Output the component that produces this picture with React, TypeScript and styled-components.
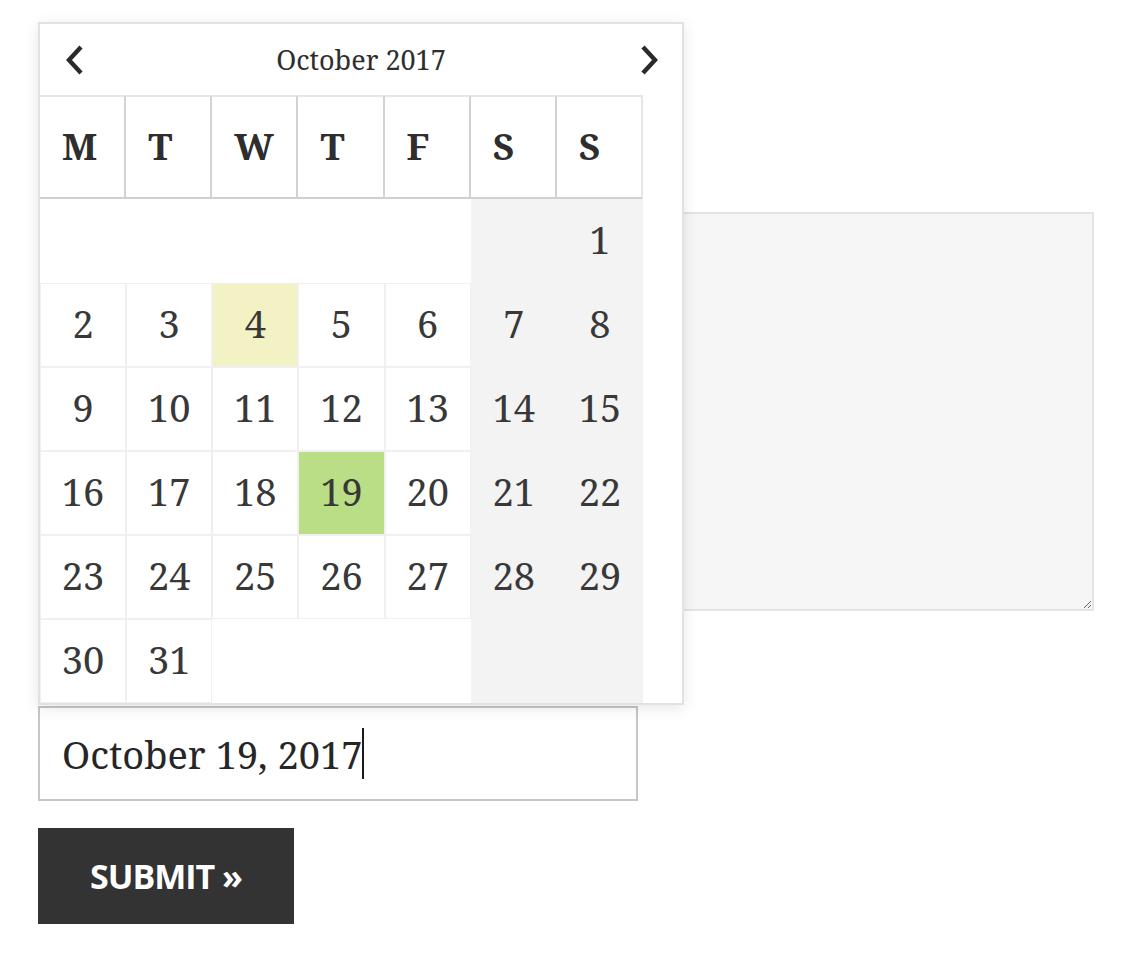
import React, { useLayoutEffect, useRef, useState } from "react";
import styled, { createGlobalStyle } from "styled-components";

const GlobalStyle = createGlobalStyle`
  html, body { margin: 0; padding: 0; background: #ffffff; }
  * { box-sizing: border-box; }
`;

const SERIF = `"Noto Serif", "Droid Serif", "DejaVu Serif", serif`;

const Form = styled.form`
  display: flex;
  flex-direction: column;
  align-items: flex-start;
  padding: 212px 0 0 38px;
  font-family: ${SERIF};
`;

const TextArea = styled.textarea`
  width: 1056px;
  height: 399px;
  background: #f6f6f6;
  border: 2px solid #e4e4e4;
  margin: 0;
  padding: 12px;
  font-family: ${SERIF};
  font-size: 24px;
  color: #333;
  outline: none;
`;

const DateField = styled.div`
  position: relative;
  margin-top: 95px;
`;

const DateInput = styled.input`
  display: block;
  width: 600px;
  height: 95px;
  border: 2px solid #c6c6c6;
  background: #fff;
  padding: 0 22px;
  font-family: ${SERIF};
  font-size: 38px;
  color: #262626;
  caret-color: transparent;
  outline: none;
`;

const Caret = styled.span`
  position: absolute;
  top: 22px;
  width: 2px;
  height: 51px;
  background: #1a1a1a;
  pointer-events: none;
`;

const SubmitButton = styled.button`
  margin-top: 27px;
  width: 256px;
  height: 96px;
  border: none;
  background: #333333;
  color: #ffffff;
  font-family: "Open Sans", "Noto Sans", sans-serif;
  font-weight: 700;
  font-size: 34px;
  letter-spacing: -1px;
  text-transform: uppercase;
  cursor: pointer;
`;

const Popup = styled.div`
  position: absolute;
  left: 0;
  bottom: calc(100% + 1px);
  width: 646px;
  background: #ffffff;
  border: 2px solid #e2e2e2;
  box-shadow: 0 3px 14px rgba(0, 0, 0, 0.1);
  z-index: 5;
`;

const Header = styled.div`
  position: relative;
  height: 71px;
  display: flex;
  align-items: center;
  justify-content: center;
`;

const Title = styled.div`
  font-family: ${SERIF};
  font-size: 27px;
  color: #2e2e2e;
`;

const NavButton = styled.button<{ $side: "left" | "right" }>`
  position: absolute;
  top: 21px;
  ${(p) => (p.$side === "left" ? "left: 24px;" : "right: 22px;")}
  width: 22px;
  height: 30px;
  padding: 0;
  border: none;
  background: transparent;
  display: flex;
  align-items: center;
  justify-content: center;
  cursor: pointer;
`;

const Grid = styled.div`
  width: 603px;
  display: grid;
  grid-template-columns: repeat(7, 1fr);
`;

const DayName = styled.div<{ $last?: boolean }>`
  height: 104px;
  display: flex;
  align-items: center;
  padding: 0 0 4px 22px;
  font-family: ${SERIF};
  font-weight: 700;
  font-size: 37px;
  color: #2e2e2e;
  border-top: 2px solid #e6e6e6;
  border-bottom: 2px solid #cfcfcf;
  border-right: ${(p) => (p.$last ? "2px solid #e6e6e6" : "2px solid #d2d2d2")};
`;

type Kind = "normal" | "today" | "selected";

const DayCell = styled.div<{ $weekend: boolean; $empty: boolean; $kind: Kind }>`
  height: 84px;
  display: flex;
  align-items: center;
  justify-content: center;
  font-family: ${SERIF};
  font-size: 38px;
  color: #383838;
  padding-bottom: 4px;
  border: 1px solid
    ${(p) => (p.$empty ? (p.$weekend ? "#f3f3f3" : "#ffffff") : p.$weekend ? "#f3f3f3" : "#f0f0f0")};
  background: ${(p) =>
    p.$kind === "today"
      ? "#f2f2c4"
      : p.$kind === "selected"
      ? "#bade85"
      : p.$weekend
      ? "#f3f3f3"
      : "#ffffff"};
  cursor: ${(p) => (p.$empty ? "default" : "pointer")};
`;

const Chevron = ({ dir }: { dir: "left" | "right" }) => (
  <svg width="22" height="30" viewBox="0 0 22 30" aria-hidden="true">
    <polyline
      points={dir === "left" ? "17,2 5,15 17,28" : "5,2 17,15 5,28"}
      fill="none"
      stroke="#2a2a2a"
      strokeWidth="4.4"
      strokeLinecap="butt"
      strokeLinejoin="miter"
    />
  </svg>
);

const DAY_NAMES = ["M", "T", "W", "T", "F", "S", "S"];
const VALUE = "October 19, 2017";

export default function App() {
  const cells: (number | null)[] = [];
  for (let i = 0; i < 6; i++) cells.push(null);
  for (let d = 1; d <= 31; d++) cells.push(d);
  while (cells.length % 7 !== 0) cells.push(null);

  const [caretX, setCaretX] = useState(360);
  const inputRef = useRef<HTMLInputElement>(null);

  useLayoutEffect(() => {
    const measure = () => {
      const el = inputRef.current;
      if (!el) return;
      const cs = window.getComputedStyle(el);
      const ctx = document.createElement("canvas").getContext("2d");
      if (!ctx) return;
      ctx.font = `${cs.fontWeight} ${cs.fontSize} ${cs.fontFamily}`;
      const w = ctx.measureText(VALUE).width;
      setCaretX(24 + w);
    };
    measure();
    if (document.fonts && document.fonts.ready) document.fonts.ready.then(measure);
  }, []);

  return (
    <>
      <GlobalStyle />
      <Form onSubmit={(e) => e.preventDefault()}>
        <TextArea defaultValue="" />
        <DateField>
          <Popup>
            <Header>
              <NavButton type="button" $side="left" aria-label="Previous month">
                <Chevron dir="left" />
              </NavButton>
              <Title>October 2017</Title>
              <NavButton type="button" $side="right" aria-label="Next month">
                <Chevron dir="right" />
              </NavButton>
            </Header>
            <Grid>
              {DAY_NAMES.map((n, i) => (
                <DayName key={i} $last={i === 6}>
                  {n}
                </DayName>
              ))}
              {cells.map((d, i) => {
                const col = i % 7;
                const weekend = col >= 5;
                const kind: Kind = d === 4 ? "today" : d === 19 ? "selected" : "normal";
                return (
                  <DayCell key={i} $weekend={weekend} $empty={d === null} $kind={kind}>
                    {d ?? ""}
                  </DayCell>
                );
              })}
            </Grid>
          </Popup>
          <DateInput ref={inputRef} type="text" defaultValue={VALUE} />
          <Caret style={{ left: caretX }} />
        </DateField>
        <SubmitButton type="submit">Submit »</SubmitButton>
      </Form>
    </>
  );
}
